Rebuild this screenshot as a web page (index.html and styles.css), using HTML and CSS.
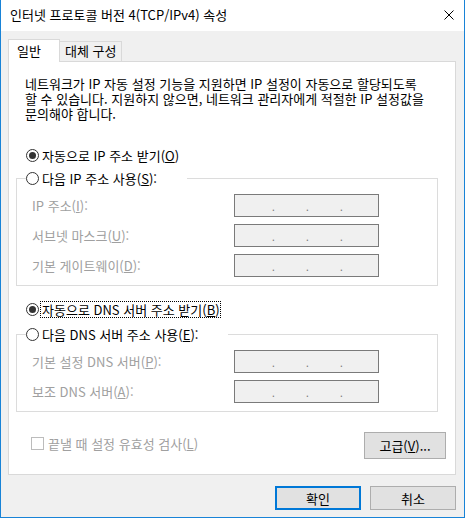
FILE: index.html
```html
<!DOCTYPE html>
<html lang="ko">
<head>
    <meta charset="UTF-8">
    <title>인터넷 프로토콜 버전 4(TCP/IPv4) 속성</title>
    <link rel="stylesheet" href="styles.css">
</head>
<body>
    <div class="window">
        <div class="titlebar">
            <span class="title">인터넷 프로토콜 버전 4(TCP/IPv4) 속성</span>
            <svg class="close" width="10" height="10" viewBox="0 0 10 10">
                <path d="M0.5 0.5 L9.5 9.5 M9.5 0.5 L0.5 9.5" stroke="#000" stroke-width="1" fill="none"/>
            </svg>
        </div>

        <div class="content">
            <div class="tabs">
                <div class="tab active">일반</div>
                <div class="tab">대체 구성</div>
            </div>

            <div class="panel">
                <p class="desc">네트워크가 IP 자동 설정 기능을 지원하면 IP 설정이 자동으로 할당되도록<br>할 수 있습니다. 지원하지 않으면, 네트워크 관리자에게 적절한 IP 설정값을<br>문의해야 합니다.</p>

                <div class="radio-row first">
                    <span class="radio checked"></span>
                    <span class="radio-text">자동으로 IP 주소 받기(<u>O</u>)</span>
                </div>

                <fieldset class="group">
                    <legend>
                        <span class="radio"></span>
                        <span class="radio-text">다음 IP 주소 사용(<u>S</u>):</span>
                    </legend>
                    <div class="fields">
                        <label>IP 주소(<u>I</u>):</label>
                        <div class="ip"><span>.</span><span>.</span><span>.</span></div>
                        <label>서브넷 마스크(<u>U</u>):</label>
                        <div class="ip"><span>.</span><span>.</span><span>.</span></div>
                        <label>기본 게이트웨이(<u>D</u>):</label>
                        <div class="ip"><span>.</span><span>.</span><span>.</span></div>
                    </div>
                </fieldset>

                <div class="radio-row dns">
                    <span class="radio checked"></span>
                    <span class="radio-text focus">자동으로 DNS 서버 주소 받기(<u>B</u>)</span>
                </div>

                <fieldset class="group dns-group">
                    <legend>
                        <span class="radio"></span>
                        <span class="radio-text">다음 DNS 서버 주소 사용(<u>E</u>):</span>
                    </legend>
                    <div class="fields">
                        <label>기본 설정 DNS 서버(<u>P</u>):</label>
                        <div class="ip"><span>.</span><span>.</span><span>.</span></div>
                        <label>보조 DNS 서버(<u>A</u>):</label>
                        <div class="ip"><span>.</span><span>.</span><span>.</span></div>
                    </div>
                </fieldset>

                <div class="bottom-row">
                    <div class="check-row">
                        <span class="checkbox"></span>
                        <span class="disabled">끝낼 때 설정 유효성 검사(<u>L</u>)</span>
                    </div>
                    <button class="btn advanced">고급(<u>V</u>)...</button>
                </div>
            </div>

            <div class="buttons">
                <button class="btn default">확인</button>
                <button class="btn">취소</button>
            </div>
        </div>
    </div>
</body>
</html>
```

FILE: styles.css
```css
* {
    box-sizing: border-box;
}
body {
    margin: 0;
    font-family: "Noto Sans CJK KR", "Noto Sans", sans-serif;
    font-size: 13px;
    color: #000;
    background: #f0f0f0;
}
.window {
    width: 465px;
    height: 518px;
    border: 1px solid #1883d7;
    border-top: none;
    background: #f0f0f0;
}
.titlebar {
    height: 31px;
    background: #fff;
    display: flex;
    align-items: center;
    justify-content: space-between;
    padding: 0 10px 0 9px;
}
.title {
    line-height: 16px;
    margin-top: -1px;
}
.close {
    display: block;
    margin-top: -1px;
}
.content {
    padding: 8px 8px 0 7px;
}
.tabs {
    display: flex;
    align-items: flex-end;
    height: 23px;
    margin-bottom: -1px;
}
.tab {
    height: 20px;
    line-height: 18px;
    padding: 0 5px;
    border: 1px solid #d9d9d9;
    border-bottom: none;
    margin-bottom: 1px;
    margin-left: -1px;
    background: #f0f0f0;
}
.tab.active {
    position: relative;
    z-index: 1;
    height: 23px;
    line-height: 22px;
    width: 52px;
    padding: 0 0 0 8px;
    margin: 0;
    background: #fff;
}
.panel {
    background: #fff;
    border: 1px solid #d9d9d9;
    width: 448px;
    height: 414px;
    padding: 0 9px 0 0;
}
.desc {
    margin: 14px 0 0 16px;
    line-height: 15px;
    white-space: nowrap;
}
.radio-row {
    display: flex;
    align-items: center;
    height: 16px;
    padding-left: 17px;
}
.radio-row.first {
    margin-top: 26px;
}
.radio-row.dns {
    margin-top: 15px;
}
.radio {
    width: 13px;
    height: 13px;
    border: 1px solid #333;
    border-radius: 50%;
    background: #fff;
    display: flex;
    align-items: center;
    justify-content: center;
    flex-shrink: 0;
}
.radio.checked::after {
    content: "";
    width: 7px;
    height: 7px;
    border-radius: 50%;
    background: #333;
}
.radio-text {
    margin-left: 3px;
    line-height: 15px;
    white-space: nowrap;
}
.radio-text.focus {
    outline: 1px dotted #000;
    margin-left: 2px;
    padding-left: 1px;
}
.group {
    margin: 7px 8px 0 7px;
    padding: 8px 0 8px 15px;
    border: 1px solid #dcdcdc;
}
.group.dns-group {
    margin-top: 9px;
}
.group legend {
    display: flex;
    align-items: center;
    height: 16px;
    padding: 0 30px 0 0;
    margin-left: -6px;
}
.fields {
    display: grid;
    grid-template-columns: 202px 145px;
    row-gap: 7px;
    align-items: center;
}
.fields label {
    color: #a0a0a0;
    white-space: nowrap;
}
.ip {
    height: 23px;
    border: 1px solid #7a7a7a;
    background: #f0f0f0;
    display: flex;
    gap: 31px;
    padding: 4px 0 0 37px;
    color: #7a7a7a;
    font-size: 10px;
    line-height: 16px;
}
.ip span {
    width: 3px;
    text-align: center;
}
.bottom-row {
    display: flex;
    justify-content: space-between;
    align-items: flex-start;
    margin-top: 20px;
    padding-left: 22px;
}
.check-row {
    display: flex;
    align-items: center;
    margin-top: 3px;
    height: 16px;
}
.checkbox {
    width: 13px;
    height: 13px;
    border: 1px solid #bcbcbc;
    background: #fff;
    margin-right: 4px;
}
.disabled {
    color: #a0a0a0;
}
.btn {
    font-family: inherit;
    font-size: 13px;
    color: #000;
    background: #e1e1e1;
    border: 1px solid #adadad;
    border-radius: 0;
    padding: 0;
    width: 86px;
    height: 24px;
}
.btn.advanced {
    width: 82px;
    height: 27px;
}
.btn.default {
    border: 2px solid #0078d7;
}
.buttons {
    display: flex;
    justify-content: flex-end;
    gap: 9px;
    margin-top: 11px;
}
```
